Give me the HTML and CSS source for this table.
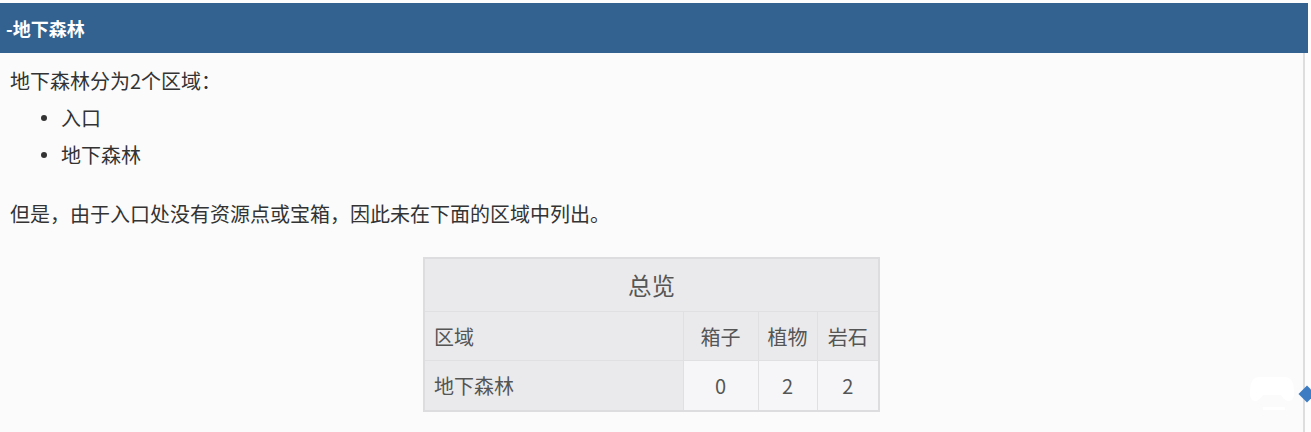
FILE: index.html
```html
<!DOCTYPE html>
<html lang="zh">
<head>
<meta charset="utf-8">
<link rel="stylesheet" href="styles.css">
</head>
<body>
<div class="page">
  <h2 class="section-head">-地下森林</h2>
  <div class="content">
    <p class="lead">地下森林分为2个区域<span class="punc">：</span></p>
    <ul class="areas">
      <li>入口</li>
      <li>地下森林</li>
    </ul>
    <p class="note">但是<span class="punc">，</span>由于入口处没有资源点或宝箱<span class="punc">，</span>因此未在下面的区域中列出。</p>
    <div class="table-wrap">
      <table class="overview">
        <colgroup>
          <col class="w-name">
          <col class="w-c1">
          <col class="w-c2">
          <col class="w-c3">
        </colgroup>
        <tr><th colspan="4" class="title">总览</th></tr>
        <tr class="head">
          <th class="name">区域</th>
          <th class="num">箱子</th>
          <th class="num">植物</th>
          <th class="num">岩石</th>
        </tr>
        <tr class="data">
          <th class="name">地下森林</th>
          <td>0</td>
          <td>2</td>
          <td>2</td>
        </tr>
      </table>
    </div>
    <svg class="logo" width="46" height="40" viewBox="0 0 46 40">
      <path d="M10 4 H36 Q44 4 45 16 Q46 28 40 28 Q36 28 32 22 H14 Q10 28 6 28 Q0 28 1 16 Q2 4 10 4 Z" fill="#ffffff"/>
      <rect x="14" y="34" width="22" height="3" fill="#ffffff"/>
    </svg>
    <span class="side-tab"></span>
  </div>
</div>
</body>
</html>
```
FILE: styles.css
```css
html, body {
  margin: 0;
  padding: 0;
}
body {
  background: #fbfbfb;
  font-family: "Noto Sans CJK SC", "Noto Sans", sans-serif;
  color: #333;
  overflow: hidden;
}
.page {
  padding-top: 3px;
  background: #fdfdfd;
}
.section-head {
  margin: 0;
  width: 1308px;
  height: 50px;
  box-sizing: border-box;
  background: #336190;
  color: #fff;
  font-size: 18px;
  font-weight: bold;
  line-height: 50px;
  padding-left: 6px;
}
.content {
  position: relative;
  width: 1305px;
  height: 379px;
  box-sizing: border-box;
  border-right: 2px solid #dedede;
  background: #fbfbfb;
  padding-top: 9px;
  font-size: 20px;
}
.punc {
  font-family: "Noto Sans CJK TC", sans-serif;
}
.lead {
  margin: 0;
  padding-left: 10px;
  line-height: 37px;
}
.areas {
  margin: 0;
  padding: 0 0 0 40px;
  list-style: none;
}
.areas li {
  line-height: 37px;
  display: flex;
  align-items: center;
}
.areas li::before {
  content: "";
  width: 6px;
  height: 6px;
  border-radius: 50%;
  background: #333;
  margin: 0 14px 0 1px;
}
.note {
  margin: 22px 0 0;
  padding-left: 10px;
  line-height: 37px;
}
.table-wrap {
  display: flex;
  justify-content: center;
  margin-top: 25px;
}
.overview {
  border-collapse: collapse;
  border: 2px solid #dddddf;
  color: #555;
  font-size: 20px;
  table-layout: fixed;
  width: 455px;
}
.w-name { width: 259px; }
.w-c1 { width: 75px; }
.w-c2 { width: 59px; }
.w-c3 { width: 62px; }
.overview th, .overview td {
  border: 1px solid #e0e0e2;
  font-weight: normal;
  padding: 0;
  white-space: nowrap;
}
.overview th {
  background: #eaeaec;
}
.overview td {
  background: #f6f6f8;
  text-align: center;
}
.overview .title {
  height: 52px;
  font-size: 23.5px;
  text-align: center;
}
.overview .head th {
  height: 48px;
}
.overview .data th, .overview .data td {
  height: 49px;
}
.overview .name {
  text-align: left;
  padding-left: 9px;
}
.overview .num {
  text-align: center;
}
.logo {
  position: absolute;
  right: 8px;
  top: 320px;
}
.side-tab {
  position: absolute;
  right: -10px;
  top: 335px;
  width: 12px;
  height: 12px;
  background: #3d7cc3;
  transform: rotate(45deg);
}
```
